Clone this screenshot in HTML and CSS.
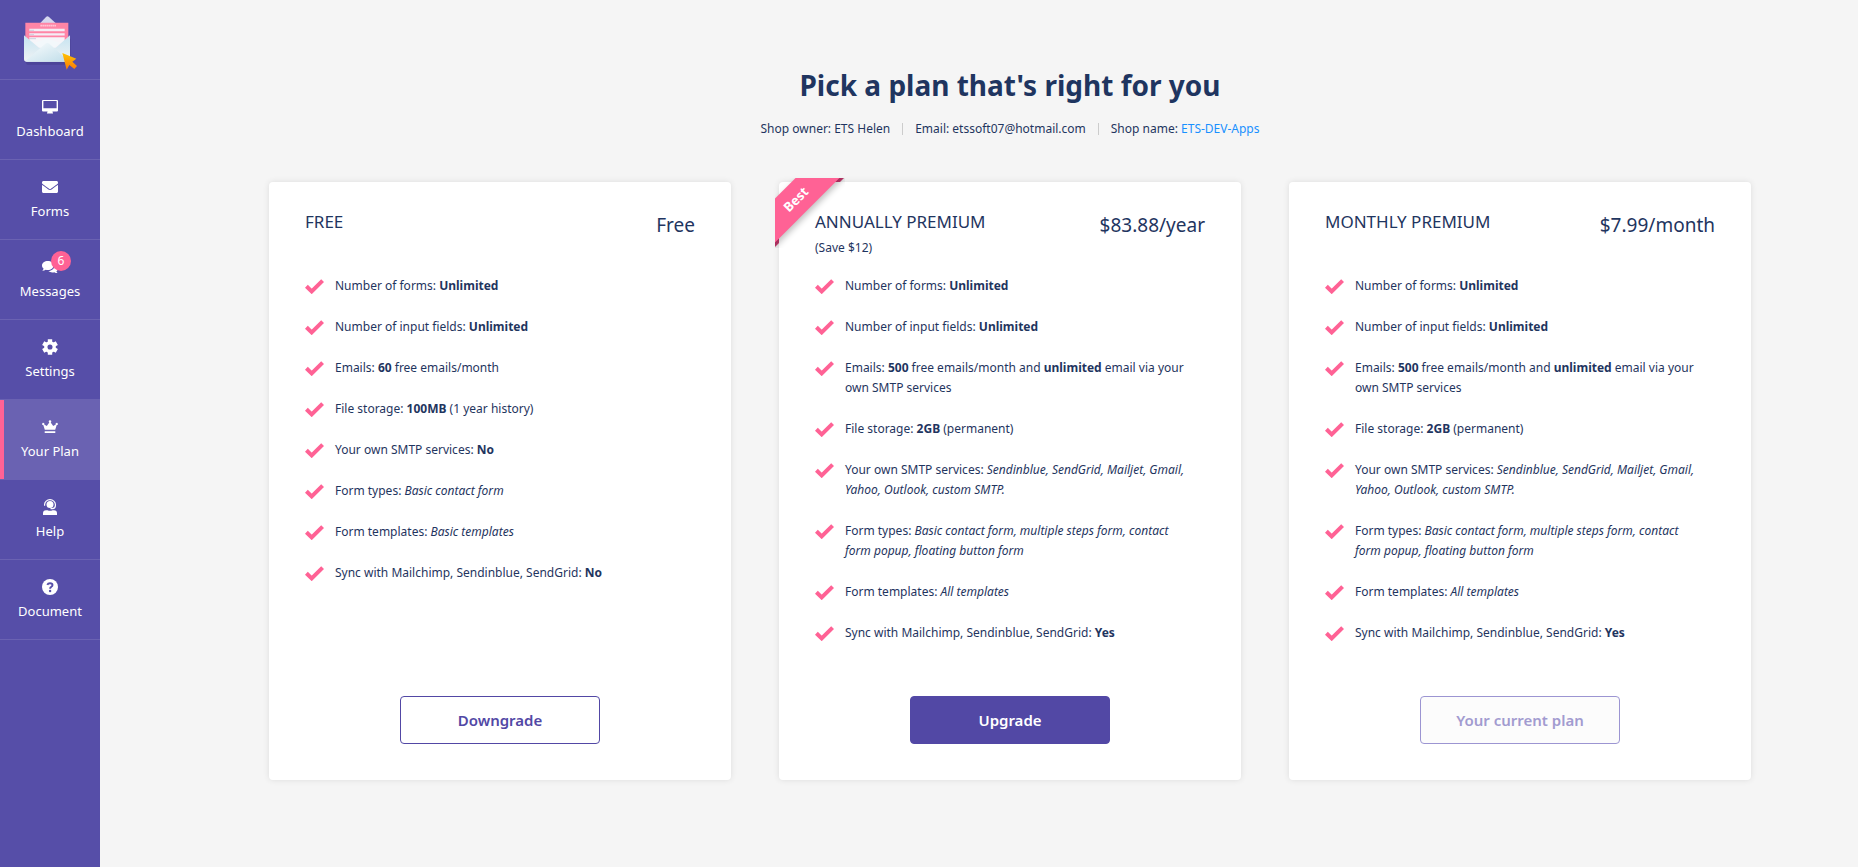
FILE: index.html
```
<!DOCTYPE html>
<html lang="en">
<head>
  <meta charset="UTF-8">
  <meta name="viewport" content="width=device-width, initial-scale=1.0">
  <title>Your Plan</title>
  <link rel="stylesheet" href="styles.css">
</head>
<body>
  <!-- shared check mark -->
  <svg class="sprite" aria-hidden="true">
    <symbol id="check" viewBox="0 0 19 15">
      <path d="M1.4 7.2l5.3 5.2L17.6 1.6" fill="none" stroke="currentColor" stroke-width="4"/>
    </symbol>
  </svg>

  <aside class="sidebar">
    <a href="#" class="logo" aria-label="Home">
      <svg viewBox="-3 -9 198 198" width="66" height="66">
        <defs>
          <linearGradient id="front" x1="0" y1="0" x2="1" y2="1">
            <stop offset="0" stop-color="#fbfdfe"/>
            <stop offset="1" stop-color="#bfdde9"/>
          </linearGradient>
          <linearGradient id="side" x1="0" y1="0" x2="0" y2="1">
            <stop offset="0" stop-color="#c5e4f1"/>
            <stop offset="1" stop-color="#f0f2f4"/>
          </linearGradient>
          <linearGradient id="arrow" x1="0" y1="0" x2="0" y2="1">
            <stop offset="0" stop-color="#ffc400"/>
            <stop offset="1" stop-color="#fb7a09"/>
          </linearGradient>
        </defs>
        <path d="M20 86q-3 74 8 78h112q14 0 18-12V86z" fill="#463d8f" opacity=".6"/>
        <path d="M64 42l20-21q4-4 9 0l23 21z" fill="#d5d7ee"/>
        <path d="M22 38h129v70H22z" fill="#ff85a6"/>
        <path d="M67 47h47" stroke="#ffc3d4" stroke-width="5" stroke-dasharray="5 1"/>
        <path d="M34 60h106M34 73h106" stroke="#f4edf5" stroke-width="7"/>
        <path d="M34 82h106v14l-28 22H62L34 96z" fill="#f6f5f9"/>
        <path d="M34 61h14M34 74h14M34 86h20" stroke="#b9bcd0" stroke-width="2"/>
        <path d="M18 76l45 37h50l43-37v71q0 8-8 8H26q-8 0-8-8z" fill="url(#side)"/>
        <path d="M50 98l38-12 38 12-38 30z" fill="#f3f8fb"/>
        <path d="M22 153l60-52q6-5 12 0l58 52q-2 2-6 2H28q-4 0-6-2z" fill="url(#front)"/>
        <path d="M133 129l42 17-12 9 14 13-8 9-15-12-8 14z" fill="url(#arrow)"/>
      </svg>
    </a>
    <nav>
      <ul class="menu">
        <li><a href="#">
          <svg viewBox="0 0 16 16"><path fill-rule="evenodd" d="M1 1h14q1 0 1 1v9.500q0 1-1 1H10.500v1h.5v1H5v-1h.5v-1H1q-1 0-1-1V2q0-1 1-1zm.4 1v7.200h13.200V2z"/></svg>
          <span>Dashboard</span>
        </a></li>
        <li><a href="#">
          <svg viewBox="0 0 512 512"><path d="M502.3 190.8c3.900-3.100 9.700-.2 9.700 4.700V400c0 26.500-21.500 48-48 48H48c-26.500 0-48-21.500-48-48V195.600c0-5 5.700-7.800 9.700-4.700 22.400 17.400 52.100 39.500 154.100 113.600 21.100 15.400 56.700 47.800 92.200 47.600 35.700.3 72-32.800 92.300-47.600 102-74.100 131.600-96.300 154-113.700zM256 320c23.200.4 56.600-29.200 73.400-41.400 132.700-96.300 142.800-104.700 173.400-128.700 5.800-4.500 9.200-11.500 9.200-18.900v-19c0-26.500-21.500-48-48-48H48c-26.500 0-48 21.500-48 48v19c0 7.400 3.400 14.300 9.200 18.900 30.600 23.900 40.700 32.400 173.400 128.700 16.800 12.200 50.200 41.800 73.400 41.400z"/></svg>
          <span>Forms</span>
        </a></li>
        <li><a href="#">
          <svg viewBox="0 0 16 16"><path d="M5.800 2C2.600 2 0 4 0 6.500c0 1.200.6 2.300 1.600 3.100-.2.800-.7 1.500-1.300 2.100 1.300 0 2.500-.4 3.400-1 .7.200 1.400.3 2.100.3 3.200 0 5.800-2 5.800-4.500S9 2 5.800 2z"/><path d="M12.700 6.200c0 3.300-2.900 5.700-6.300 5.900 1 .9 2.400 1.400 3.900 1.400.7 0 1.400-.1 2-.3.9.6 2 .9 3.300.9-.6-.5-1-1.200-1.200-1.900 1-.7 1.600-1.700 1.600-2.800 0-1.400-1.300-2.600-3.300-3.200z"/></svg>
          <span>Messages</span>
          <em class="badge">6</em>
        </a></li>
        <li><a href="#">
          <svg viewBox="0 0 16 16">
            <g stroke="#fff" stroke-width="4.400" stroke-linejoin="round">
              <path d="M8 .2v3M8 12.800v3M1.200 4.100l2.700 1.500M12.100 10.400l2.700 1.500M1.200 11.900l2.700-1.500M12.100 5.600l2.700-1.500"/>
            </g>
            <circle cx="8" cy="8" r="4.200" fill="none" stroke="#fff" stroke-width="3.300"/>
          </svg>
          <span>Settings</span>
        </a></li>
        <li class="active"><a href="#">
          <svg viewBox="0 0 16 16"><path d="M2.800 10.800L1.300 6.100A1.100 1.100 0 1 1 2.200 5.600L4.800 7 7.300 3.400a1.200 1.200 0 1 1 1.400 0L11.200 7l2.600-1.400a1.100 1.100 0 1 1 .9.500l-1.500 4.700zM2.700 12.300h10.600v1.800H2.700z"/></svg>
          <span>Your Plan</span>
        </a></li>
        <li><a href="#">
          <svg viewBox="0 0 16 16">
            <circle cx="8" cy="5.500" r="3.500"/>
            <path d="M2.600 6.800V5.600a5.400 5 0 0 1 10.800 0v1q0 3-2.900 3H8.500" fill="none" stroke="#fff" stroke-width="1.200"/>
            <path d="M4 11.300h1.500q2.500 1 5 0H12q3 0 3 3V16H1v-1.700q0-3 3-3z"/>
          </svg>
          <span>Help</span>
        </a></li>
        <li><a href="#">
          <svg viewBox="0 0 16 16">
            <circle cx="8" cy="8" r="8"/>
            <path d="M5.300 5.900Q6 4.200 8 4.200q2.500 0 2.500 1.900 0 1-1.200 1.700Q8.100 8.400 8.100 9.700" fill="none" stroke="#564ea8" stroke-width="1.900"/>
            <circle cx="8.100" cy="12" r="1.200" fill="#564ea8"/>
          </svg>
          <span>Document</span>
        </a></li>
      </ul>
    </nav>
  </aside>

  <main class="content">
    <h1>Pick a plan that's right for you</h1>
    <ul class="shop-info">
      <li>Shop owner: ETS Helen</li>
      <li>Email: etssoft07@hotmail.com</li>
      <li>Shop name: <a href="#">ETS-DEV-Apps</a></li>
    </ul>

    <div class="plans">
      <section class="plan">
        <div class="plan-head">
          <h2>FREE</h2>
          <div class="price">Free</div>
        </div>
        <ul class="features">
          <li><svg><use href="#check"/></svg><p>Number of forms: <b>Unlimited</b></p></li>
          <li><svg><use href="#check"/></svg><p>Number of input fields: <b>Unlimited</b></p></li>
          <li><svg><use href="#check"/></svg><p>Emails: <b>60</b> free emails/month</p></li>
          <li><svg><use href="#check"/></svg><p>File storage: <b>100MB</b> (1 year history)</p></li>
          <li><svg><use href="#check"/></svg><p>Your own SMTP services: <b>No</b></p></li>
          <li><svg><use href="#check"/></svg><p>Form types: <i>Basic contact form</i></p></li>
          <li><svg><use href="#check"/></svg><p>Form templates: <i>Basic templates</i></p></li>
          <li><svg><use href="#check"/></svg><p>Sync with Mailchimp, Sendinblue, SendGrid: <b>No</b></p></li>
        </ul>
        <button type="button" class="btn">Downgrade</button>
      </section>

      <section class="plan">
        <div class="ribbon"><span>Best</span></div>
        <div class="plan-head">
          <div>
            <h2>ANNUALLY PREMIUM</h2>
            <p class="save">(Save $12)</p>
          </div>
          <div class="price">$83.88/year</div>
        </div>
        <ul class="features">
          <li><svg><use href="#check"/></svg><p>Number of forms: <b>Unlimited</b></p></li>
          <li><svg><use href="#check"/></svg><p>Number of input fields: <b>Unlimited</b></p></li>
          <li><svg><use href="#check"/></svg><p>Emails: <b>500</b> free emails/month and <b>unlimited</b> email via your own SMTP services</p></li>
          <li><svg><use href="#check"/></svg><p>File storage: <b>2GB</b> (permanent)</p></li>
          <li><svg><use href="#check"/></svg><p>Your own SMTP services: <i>Sendinblue, SendGrid, Mailjet, Gmail, Yahoo, Outlook, custom SMTP.</i></p></li>
          <li><svg><use href="#check"/></svg><p>Form types: <i>Basic contact form, multiple steps form, contact form popup, floating button form</i></p></li>
          <li><svg><use href="#check"/></svg><p>Form templates: <i>All templates</i></p></li>
          <li><svg><use href="#check"/></svg><p>Sync with Mailchimp, Sendinblue, SendGrid: <b>Yes</b></p></li>
        </ul>
        <button type="button" class="btn btn-primary">Upgrade</button>
      </section>

      <section class="plan">
        <div class="plan-head">
          <h2>MONTHLY PREMIUM</h2>
          <div class="price">$7.99/month</div>
        </div>
        <ul class="features">
          <li><svg><use href="#check"/></svg><p>Number of forms: <b>Unlimited</b></p></li>
          <li><svg><use href="#check"/></svg><p>Number of input fields: <b>Unlimited</b></p></li>
          <li><svg><use href="#check"/></svg><p>Emails: <b>500</b> free emails/month and <b>unlimited</b> email via your own SMTP services</p></li>
          <li><svg><use href="#check"/></svg><p>File storage: <b>2GB</b> (permanent)</p></li>
          <li><svg><use href="#check"/></svg><p>Your own SMTP services: <i>Sendinblue, SendGrid, Mailjet, Gmail, Yahoo, Outlook, custom SMTP.</i></p></li>
          <li><svg><use href="#check"/></svg><p>Form types: <i>Basic contact form, multiple steps form, contact form popup, floating button form</i></p></li>
          <li><svg><use href="#check"/></svg><p>Form templates: <i>All templates</i></p></li>
          <li><svg><use href="#check"/></svg><p>Sync with Mailchimp, Sendinblue, SendGrid: <b>Yes</b></p></li>
        </ul>
        <button type="button" class="btn" disabled>Your current plan</button>
      </section>
    </div>
  </main>
</body>
</html>
```
FILE: styles.css
```
* {
  box-sizing: border-box;
}

body {
  margin: 0;
  display: flex;
  min-height: 100vh;
  font-family: "Noto Sans", "Open Sans", sans-serif;
  font-size: 12px;
  line-height: 20px;
  color: #1f3560;
  background: #f5f5f5;
}

h1, h2, p, ul {
  margin: 0;
  padding: 0;
}

ul {
  list-style: none;
}

a {
  color: #1890ff;
  text-decoration: none;
}

.sprite {
  position: absolute;
  width: 0;
  height: 0;
}

/* sidebar */
.sidebar {
  flex: none;
  width: 100px;
  background: #564ea8;
}

.logo {
  display: flex;
  align-items: center;
  justify-content: center;
  height: 79px;
}

.menu {
  border-top: 1px solid #6a62b2;
}

.menu li {
  border-bottom: 1px solid #6a62b2;
}

.menu a {
  position: relative;
  display: flex;
  flex-direction: column;
  align-items: center;
  justify-content: center;
  gap: 6px;
  height: 79px;
  font-size: 13px;
  color: #fff;
}

.menu svg {
  width: 16px;
  height: 16px;
  fill: #fff;
}

.menu .active a {
  background: #6a62b2;
}

.menu .active a::before {
  content: "";
  position: absolute;
  left: 0;
  top: 0;
  bottom: 0;
  width: 4px;
  background: #ff6295;
}

.badge {
  position: absolute;
  top: 11px;
  left: 51px;
  width: 20px;
  height: 20px;
  border-radius: 10px;
  font-size: 12px;
  font-style: normal;
  text-align: center;
  background: #ff6295;
}

/* content */
.content {
  flex: 1;
  padding: 67px 107px 40px 169px;
}

h1 {
  font-size: 28px;
  line-height: 36px;
  text-align: center;
}

.shop-info {
  display: flex;
  justify-content: center;
  align-items: center;
  margin: 16px 0 43px;
}

.shop-info li {
  display: flex;
  align-items: center;
  white-space: pre;
}

.shop-info li + li::before {
  content: "";
  width: 1px;
  height: 12px;
  margin: 0 12px;
  background: #ccc;
}

/* plans */
.plans {
  display: grid;
  grid-template-columns: repeat(3, 1fr);
  gap: 48px;
}

.plan {
  position: relative;
  display: flex;
  flex-direction: column;
  padding: 30px 36px 36px;
  background: #fff;
  border-radius: 4px;
  box-shadow: 0 0 6px rgba(0, 0, 0, 0.1);
}

.plan-head {
  display: flex;
  justify-content: space-between;
  min-height: 46px;
  margin-bottom: 18px;
}

h2 {
  font-size: 17px;
  line-height: 20px;
  font-weight: 400;
}

.save {
  margin-top: 6px;
}

.price {
  font-size: 19px;
  line-height: 26px;
}

.features {
  flex: 1;
  display: flex;
  flex-direction: column;
  gap: 21px;
  padding-right: 16px;
}

.features li {
  display: flex;
  gap: 11px;
}

.features svg {
  flex: none;
  width: 19px;
  height: 15px;
  margin-top: 3px;
  color: #ff6295;
}

.btn {
  align-self: center;
  width: 200px;
  height: 48px;
  margin-top: 53px;
  border: 1px solid #5248a5;
  border-radius: 4px;
  font-family: inherit;
  font-size: 15px;
  font-weight: 600;
  color: #5248a5;
  background: #fff;
  cursor: pointer;
}

.btn-primary {
  color: #fff;
  background: #5248a5;
}

.btn:disabled {
  border-color: #9c95d2;
  color: #a29bd0;
  background: #fcfcfc;
  cursor: not-allowed;
}

/* corner ribbon */
.ribbon {
  position: absolute;
  top: -4px;
  left: -4px;
  width: 70px;
  height: 70px;
  overflow: hidden;
}

.ribbon::before,
.ribbon::after {
  content: "";
  position: absolute;
  border: 4px solid #c9386f;
}

.ribbon::before {
  top: 0;
  right: 1px;
  border-bottom: 0;
  border-left-width: 8px;
  border-right-color: transparent;
}

.ribbon::after {
  left: 0;
  bottom: 1px;
  border-right: 0;
  border-top-width: 8px;
  border-bottom-color: transparent;
}

.ribbon span {
  position: absolute;
  z-index: 1;
  top: 6px;
  left: -29px;
  width: 100px;
  line-height: 31px;
  font-size: 13px;
  font-weight: 700;
  text-align: center;
  color: #fff;
  background: #ff6295;
  box-shadow: 0 3px 6px rgba(0, 0, 0, 0.25);
  transform: rotate(-45deg);
}
```
